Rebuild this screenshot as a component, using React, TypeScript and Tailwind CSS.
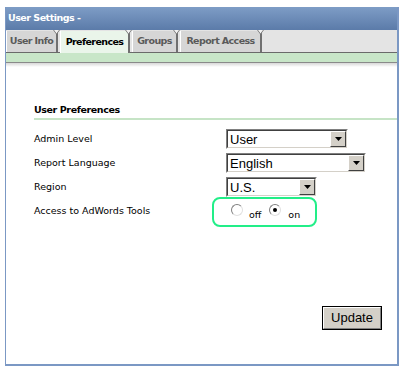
import React from "react";

const ui = { fontFamily: '"DejaVu Sans", Verdana, sans-serif' };
const arial = { fontFamily: '"Liberation Sans", Arial, sans-serif' };

function Notch() {
  return (
    <svg className="absolute right-[-4px] top-[-1px]" width="7" height="5" viewBox="0 0 7 5">
      <path d="M0.5 0 L3.5 4 L6.5 0" fill="#f2f2f2" stroke="#808080" strokeWidth="1" />
    </svg>
  );
}

function Tab({ label, active, w }: { label: string; active?: boolean; w: number }) {
  return (
    <div
      className={
        "relative flex items-center mr-[2px] font-bold text-[9.5px] tracking-[-0.6px] border-l border-l-white border-r-2 border-r-[#707070] " +
        (active ? "bg-[#eaf5ea] text-black h-[22px] mb-[-1px]" : "bg-[#d6d6d6] text-[#5a5a5a] h-[21px]")
      }
      style={{ ...ui, width: w }}
    >
      <span className="w-full text-center whitespace-nowrap">{label}</span>
      <Notch />
    </div>
  );
}

function DropBtn() {
  return (
    <div className="w-[16px] h-[16px] bg-[#d4d0c8] border border-t-white border-l-white border-b-[#404040] border-r-[#404040] flex items-center justify-center shrink-0">
      <svg width="7" height="4" viewBox="0 0 7 4">
        <path d="M0 0 H7 L3.5 4 Z" fill="#000" />
      </svg>
    </div>
  );
}

function Select({ value, width }: { value: string; width: number }) {
  return (
    <div
      className="h-[20px] border border-t-[#808080] border-l-[#808080] border-b-white border-r-white"
      style={{ width }}
    >
      <div className="h-full border border-t-[#404040] border-l-[#404040] border-b-[#d4d0c8] border-r-[#d4d0c8] bg-white flex items-center">
        <span className="flex-1 pl-[2px] text-[13px] leading-none text-black" style={arial}>
          {value}
        </span>
        <DropBtn />
      </div>
    </div>
  );
}

function Radio({ checked }: { checked?: boolean }) {
  return (
    <div className="w-[12px] h-[12px] rounded-full border border-t-[#808080] border-l-[#808080] border-b-[#e0e0e0] border-r-[#e0e0e0] bg-white flex items-center justify-center shrink-0">
      {checked && <div className="w-[4px] h-[4px] rounded-full bg-black" />}
    </div>
  );
}

export default function App() {
  return (
    <div className="w-[405px] h-[377px] bg-white pt-[7px] pl-[5px]">
      <div className="w-[394px] h-[359px] border-l border-r-2 border-b-2 border-[#7b98c4] flex flex-col">
        <div
          className="h-[23px] flex items-center pl-[2px] text-white font-bold text-[9.5px] tracking-[-0.5px] bg-gradient-to-b from-[#7e9dc6] to-[#5b7ba9]"
          style={ui}
        >
          User Settings -
        </div>
        <div className="h-[23px] bg-[#e4e4e4] flex items-end border-b border-[#6a6a6a]">
          <Tab label="User Info" w={52} />
          <Tab label="Preferences" active w={70} />
          <Tab label="Groups" w={46} />
          <Tab label="Report Access" w={82} />
        </div>
        <div className="h-[9px] bg-[#c8e6c8] border-b border-[#8a8a8a] box-content" />
        <div className="h-[4px] bg-gradient-to-b from-[#d8d8d8] to-white" />
        <div className="pl-[28px] pt-[36px] flex flex-col">
          <div className="font-bold text-[9.5px] tracking-[-0.4px] text-black leading-[13px]" style={ui}>
            User Preferences
          </div>
          <div className="h-[2px] bg-[#c6e4c6] mt-[2px]" />
          <div className="mt-[9px] flex flex-col gap-[4px] text-[9.5px] text-black" style={ui}>
            <div className="flex items-center">
              <div className="w-[192px]">Admin Level</div>
              <Select value="User" width={122} />
            </div>
            <div className="flex items-center">
              <div className="w-[192px]">Report Language</div>
              <Select value="English" width={140} />
            </div>
            <div className="flex items-center">
              <div className="w-[192px]">Region</div>
              <Select value="U.S." width={91} />
            </div>
            <div className="flex items-start mt-[-4px]">
              <div className="w-[178px] pt-[7px]">Access to AdWords Tools</div>
              <div className="w-[105px] h-[30px] border-2 border-[#22ee88] rounded-[8px] flex items-start pt-[5px] pl-[17px]">
                <Radio />
                <span className="ml-[6px] mt-[4px] text-[9.5px]">off</span>
                <div className="ml-[8px]">
                  <Radio checked />
                </div>
                <span className="ml-[7px] mt-[4px] text-[9.5px]">on</span>
              </div>
            </div>
          </div>
          <div className="flex justify-end pr-[15px] mt-[79px]">
            <button
              className="w-[60px] h-[24px] border border-black bg-[#d4d0c8] p-0"
              style={arial}
            >
              <div className="w-full h-full border border-t-white border-l-white border-b-[#808080] border-r-[#808080] flex items-center justify-center text-[13px] text-black">
                Update
              </div>
            </button>
          </div>
        </div>
      </div>
    </div>
  );
}
